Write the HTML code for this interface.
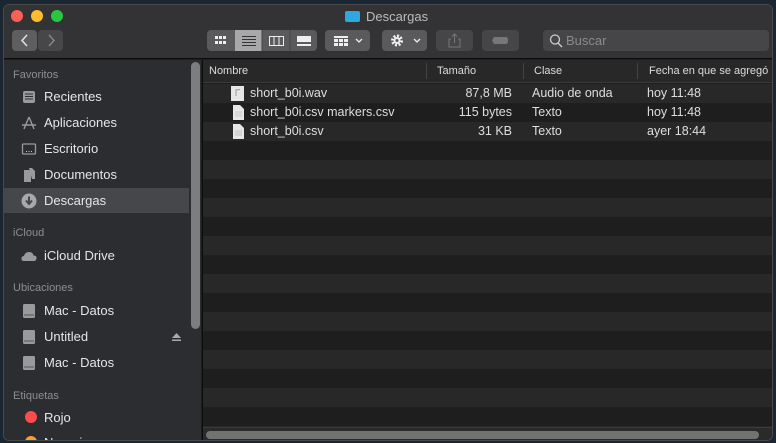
<!DOCTYPE html>
<html><head><meta charset="utf-8"><style>
*{margin:0;padding:0;box-sizing:border-box}
body{width:776px;height:443px;overflow:hidden;background:#1b2633;font-family:"Liberation Sans",sans-serif;position:relative}
.win{position:absolute;left:3px;top:4px;width:770px;height:437px;border-radius:6px;overflow:hidden;background:#1e1e1e;border:1px solid #4a4a4a}
.tb{position:absolute;left:0;top:0;width:100%;height:54px;background:#333335;border-bottom:1px solid #0c0c0c}
.dot{position:absolute;top:5px;width:12px;height:12px;border-radius:50%}
.title{position:absolute;top:4px;left:340px;color:#bcbcbc;font-size:13px}
.btn{position:absolute;top:25px;height:21px;background:#5a5a5c;border-radius:4px}
.side{position:absolute;left:0;top:55px;width:197px;height:382px;background:#2b2d31}
.sh{position:absolute;left:9px;font-size:11px;color:#8d8e90}
.si{position:absolute;left:40px;font-size:13px;color:#e6e6e6}
.ic{position:absolute;left:17px;width:16px;height:16px}
.content{position:absolute;left:198px;top:55px;width:572px;height:382px;border-left:1px solid #0c0c0c}
.hdr{position:absolute;top:0;left:0;width:100%;height:23px;background:#282828;border-bottom:1px solid #3a3a3a;font-size:11px;color:#dcdcdc}
.hdr span{position:absolute;top:5px}
.sep{position:absolute;top:3px;width:1px;height:16px;background:#444}
.row{position:absolute;left:0;width:100%;height:19px;font-size:12.5px;color:#dedede}
.row span{position:absolute;top:2px}
</style></head><body>
<div class="win">
<div class="tb">
<div class="dot" style="left:7px;background:#fe5f57"></div>
<div class="dot" style="left:27px;background:#febc2e"></div>
<div class="dot" style="left:47px;background:#28c840"></div>
<div style="position:absolute;left:341px;top:6px;width:15px;height:11px;background:#2ea8df;border-radius:2px"></div>
<div class="title" style="left:362px">Descargas</div>
<div class="btn" style="left:8px;width:25px;background:#5e5e60"><svg width="25" height="21"><path d="M15 5 L10 10.5 L15 16" stroke="#ddd" stroke-width="1.6" fill="none"/></svg></div>
<div class="btn" style="left:34px;width:25px;background:#47474a"><svg width="25" height="21"><path d="M11 5 L16 10.5 L11 16" stroke="#888" stroke-width="1.4" fill="none"/></svg></div>
<div class="btn" style="left:203px;width:110px;background:#5a5a5c;overflow:hidden">
<div style="position:absolute;left:28px;width:27px;height:21px;background:#a8a8aa"></div>
<svg width="110" height="21" style="position:absolute;left:0;top:0"><g fill="#eee"><rect x="8" y="6" width="3" height="3"/><rect x="12" y="6" width="3" height="3"/><rect x="16" y="6" width="3" height="3"/><rect x="8" y="11" width="3" height="3"/><rect x="12" y="11" width="3" height="3"/><rect x="16" y="11" width="3" height="3"/></g><g fill="#333"><rect x="35" y="6" width="14" height="1"/><rect x="35" y="9" width="14" height="1"/><rect x="35" y="12" width="14" height="1"/><rect x="35" y="15" width="14" height="1"/></g><rect x="62.5" y="6.5" width="14" height="9" stroke="#eee" fill="none"/><line x1="67" y1="6" x2="67" y2="16" stroke="#eee"/><line x1="72" y1="6" x2="72" y2="16" stroke="#eee"/><rect x="90" y="6" width="14" height="6" fill="#eee"/><rect x="90" y="14" width="14" height="2" fill="#eee"/><line x1="55" y1="0" x2="55" y2="21" stroke="#444"/><line x1="83" y1="0" x2="83" y2="21" stroke="#444"/></svg></div>
<div class="btn" style="left:321px;width:45px"><svg width="45" height="21"><g fill="#eee"><rect x="9" y="6" width="14" height="2"/><rect x="9" y="9" width="4" height="3"/><rect x="14" y="9" width="4" height="3"/><rect x="19" y="9" width="4" height="3"/><rect x="9" y="13" width="4" height="3"/><rect x="14" y="13" width="4" height="3"/><rect x="19" y="13" width="4" height="3"/></g><path d="M31 9 L34 12 L37 9" stroke="#eee" stroke-width="1.3" fill="none"/></svg></div>
<div class="btn" style="left:378px;width:45px"><svg width="45" height="21"><circle cx="15" cy="10.5" r="4.5" fill="none" stroke="#eee" stroke-width="3" stroke-dasharray="2 1.5"/><circle cx="15" cy="10.5" r="3.5" fill="#eee"/><circle cx="15" cy="10.5" r="1.5" fill="#5a5a5c"/><path d="M32 9 L35 12 L38 9" stroke="#eee" stroke-width="1.3" fill="none"/></svg></div>
<div class="btn" style="left:432px;width:37px;background:#464648"><svg width="37" height="21"><path d="M15 9 H13 V17 H24 V9 H22 M18.5 13 V4 M16 6.5 L18.5 4 L21 6.5" stroke="#777" fill="none"/></svg></div>
<div class="btn" style="left:478px;width:37px;background:#464648"><svg width="37" height="21"><path d="M12 7 H24 Q26 7 26 10.5 Q26 14 24 14 H12 L10 10.5 Z" fill="#777"/></svg></div>
<div class="btn" style="left:539px;width:226px;background:#464648"><svg width="20" height="21" style="position:absolute;left:3px"><circle cx="9" cy="9.5" r="4.5" stroke="#ccc" stroke-width="1.3" fill="none"/><line x1="12" y1="13" x2="16" y2="17" stroke="#ccc" stroke-width="1.4"/></svg><span style="position:absolute;left:23px;top:3px;font-size:13px;color:#8a8a8a">Buscar</span></div>
</div>
<div class="side">
<div style="position:absolute;left:0;top:128px;width:185px;height:25px;background:#45474b"></div>
<div style="position:absolute;left:187px;top:2px;width:9px;height:267px;border-radius:5px;background:#7b7d81"></div>
<div class="sh" style="top:9px">Favoritos</div>
<svg class="ic" style="top:29px" viewBox="0 0 16 16"><rect x="2" y="2" width="12" height="12" rx="2" fill="#9a9a9c"/><g stroke="#2b2d31"><line x1="4" y1="5" x2="12" y2="5"/><line x1="4" y1="7.5" x2="12" y2="7.5"/><line x1="4" y1="10" x2="12" y2="10"/></g></svg>
<div class="si" style="top:29px">Recientes</div>
<svg class="ic" style="top:55px" viewBox="0 0 16 16"><path d="M8 2 L3 14 M8 2 L13 14 M1 10 H15" stroke="#9a9a9c" stroke-width="1.4" fill="none"/></svg>
<div class="si" style="top:55px">Aplicaciones</div>
<svg class="ic" style="top:81px" viewBox="0 0 16 16"><rect x="1.5" y="3" width="13" height="10" rx="1" stroke="#9a9a9c" stroke-width="1.3" fill="none"/><g fill="#ccc"><rect x="5" y="10" width="1" height="1"/><rect x="7.5" y="10" width="1" height="1"/><rect x="10" y="10" width="1" height="1"/></g></svg>
<div class="si" style="top:81px">Escritorio</div>
<svg class="ic" style="top:107px" viewBox="0 0 16 16"><path d="M3 3 H8 L10 5 V15 H3 Z M8 1 H11 L14 4 V12 H11" fill="#9a9a9c"/></svg>
<div class="si" style="top:107px">Documentos</div>
<svg class="ic" style="top:133px" viewBox="0 0 16 16"><circle cx="8" cy="8" r="7.5" fill="#a8a8aa"/><path d="M8 3.5 V10 M5 7.5 L8 11 L11 7.5" stroke="#45474b" stroke-width="2" fill="none"/></svg>
<div class="si" style="top:133px">Descargas</div>
<div class="sh" style="top:167px">iCloud</div>
<svg class="ic" style="top:188px" viewBox="0 0 16 16"><path d="M3 13 Q0 13 0.5 10 Q1 8 3 8 Q4 4 8 4 Q12 4 12.5 7.5 Q16 7.5 15.5 10.5 Q15 13 13 13 Z" fill="#9a9a9c"/></svg>
<div class="si" style="top:188px">iCloud Drive</div>
<div class="sh" style="top:222px">Ubicaciones</div>
<svg class="ic" style="top:243px" viewBox="0 0 16 16"><rect x="2" y="1" width="12" height="14" rx="1.5" fill="#9a9a9c"/><line x1="3" y1="12" x2="13" y2="12" stroke="#555"/></svg>
<div class="si" style="top:243px">Mac - Datos</div>
<svg class="ic" style="top:269px" viewBox="0 0 16 16"><rect x="2" y="1" width="12" height="14" rx="1.5" fill="#9a9a9c"/><line x1="3" y1="12" x2="13" y2="12" stroke="#555"/></svg>
<div class="si" style="top:269px">Untitled</div>
<svg style="position:absolute;left:167px;top:273px" width="11" height="9"><path d="M5.5 0 L10 5 H1 Z" fill="#aaa"/><rect x="1" y="6.5" width="9" height="1.5" fill="#aaa"/></svg>
<svg class="ic" style="top:295px" viewBox="0 0 16 16"><rect x="2" y="1" width="12" height="14" rx="1.5" fill="#9a9a9c"/><line x1="3" y1="12" x2="13" y2="12" stroke="#555"/></svg>
<div class="si" style="top:295px">Mac - Datos</div>
<div class="sh" style="top:330px">Etiquetas</div>
<div style="position:absolute;left:21px;top:351px;width:12px;height:12px;border-radius:50%;background:#fe4b4b"></div>
<div class="si" style="top:350px">Rojo</div>
<div style="position:absolute;left:21px;top:376px;width:12px;height:12px;border-radius:50%;background:#f5a030"></div>
<div class="si" style="top:375px">Naranja</div>
</div>
<div class="content">
<div class="hdr"><span style="left:6px">Nombre</span><div class="sep" style="left:223px"></div><span style="left:234px">Tamaño</span><div class="sep" style="left:320px"></div><span style="left:331px">Clase</span><div class="sep" style="left:434px"></div><span style="left:446px;white-space:nowrap">Fecha en que se agregó</span></div>
<div class="row" style="top:24px;background:#282828"><svg style="position:absolute;left:28px;top:2px" width="14" height="15"><rect x="0" y="0" width="13" height="15" fill="#e6e6e6"/><path d="M5 10 V4 L9 3.5" stroke="#999" fill="none"/></svg><span style="left:47px">short_b0i.wav</span><span style="right:262px">87,8 MB</span><span style="left:329px">Audio de onda</span><span style="left:444px">hoy 11:48</span></div>
<div class="row" style="top:43px;background:#1e1e1e"><svg style="position:absolute;left:30px;top:2px" width="11" height="15"><path d="M0 0 H7 L11 4 V15 H0 Z" fill="#e6e6e6"/><g stroke="#aaa" stroke-width=".6"><line x1="2" y1="7" x2="9" y2="7"/><line x1="2" y1="9" x2="9" y2="9"/><line x1="2" y1="11" x2="9" y2="11"/></g></svg><span style="left:47px">short_b0i.csv markers.csv</span><span style="right:262px">115 bytes</span><span style="left:329px">Texto</span><span style="left:444px">hoy 11:48</span></div>
<div class="row" style="top:62px;background:#282828"><svg style="position:absolute;left:30px;top:2px" width="11" height="15"><path d="M0 0 H7 L11 4 V15 H0 Z" fill="#e6e6e6"/><g stroke="#aaa" stroke-width=".6"><line x1="2" y1="7" x2="9" y2="7"/><line x1="2" y1="9" x2="9" y2="9"/><line x1="2" y1="11" x2="9" y2="11"/></g></svg><span style="left:47px">short_b0i.csv</span><span style="right:262px">31 KB</span><span style="left:329px">Texto</span><span style="left:444px">ayer 18:44</span></div>
<div style="position:absolute;left:0;top:81px;width:100%;height:287px;background:repeating-linear-gradient(#1e1e1e 0 19px,#282828 19px 38px)"></div>
<div style="position:absolute;left:0;top:367px;width:100%;height:15px;background:#2a2a2a;border-top:1px solid #3a3a3a"></div>
<div style="position:absolute;left:3px;top:371px;width:553px;height:8px;border-radius:4px;background:#727272"></div>
</div>
</div>
</body></html>
